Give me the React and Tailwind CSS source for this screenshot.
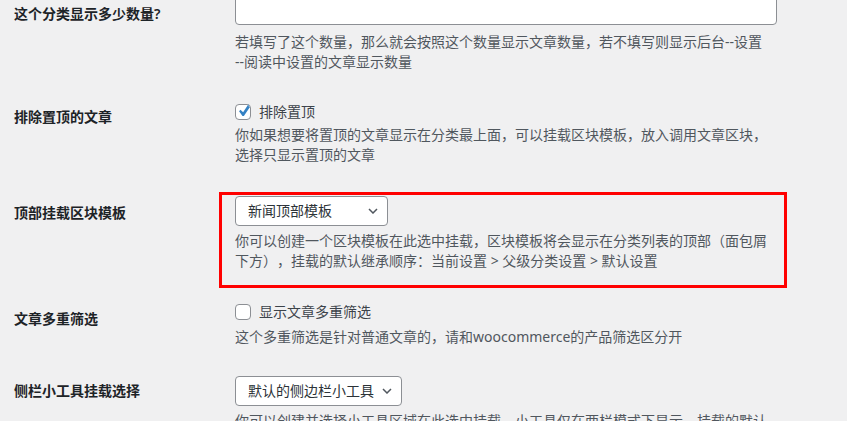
import React from "react";

const Chevron = () => (
  <svg width="10" height="6" viewBox="0 0 10 6" fill="none" stroke="#50575e" strokeWidth="1.5">
    <path d="M1 1l4 4 4-4" />
  </svg>
);

const Checkbox = ({ checked }) => (
  <span className="flex items-center justify-center w-[16px] h-[16px] shrink-0 rounded-[4px] border border-[#8c8f94] bg-white overflow-visible">
    {checked && (
      <svg width="21" height="21" viewBox="0 0 20 20" className="shrink-0 -mr-[1px] mb-[1px]">
        <path fill="#3582c4" d="M14.83 4.89l1.34.94-5.81 8.38H9.02L5.78 9.67l1.34-1.25 2.53 2.36 5.18-7.89z" />
      </svg>
    )}
  </span>
);

const Select = ({ value, width }) => (
  <div className={`flex items-center justify-between h-[30px] ${width} pl-[12px] pr-[9px] rounded-[4px] border border-[#8c8f94] bg-white text-[14px] leading-5 text-[#2c3338]`}>
    <span>{value}</span>
    <Chevron />
  </div>
);

const Label = ({ children, pt }) => (
  <div className={`w-[219px] shrink-0 pl-[14px] ${pt} text-[14px] leading-5 font-semibold text-[#1d2327]`}>
    {children}
  </div>
);

export default function App() {
  return (
    <div
      className="min-h-screen bg-[#f0f0f1] overflow-hidden [text-spacing-trim:space-all]"
      style={{ fontFamily: '"Noto Sans", "Noto Sans CJK SC", sans-serif' }}
    >
      {/* 数量 */}
      <div className="flex items-start -mt-[5px]">
        <Label pt="pt-[9px]">这个分类显示多少数量?</Label>
        <div className="w-[568px] pl-[16px] pr-[10px]">
          <input
            type="text"
            className="block w-full h-[30px] rounded-[4px] border border-[#8c8f94] bg-white"
          />
          <p className="mt-[7px] text-[14px] leading-5 text-[#50575e]">
            若填写了这个数量，那么就会按照这个数量显示文章数量，若不填写则显示后台--设置
            <br />
            --阅读中设置的文章显示数量
          </p>
        </div>
      </div>

      {/* 置顶 */}
      <div className="flex items-start">
        <Label pt="pt-[35px]">排除置顶的文章</Label>
        <div className="w-[568px] pl-[16px] pr-[10px] pt-[30px]">
          <label className="flex items-center gap-[8px] h-5 text-[14px] leading-5 text-[#3c434a]">
            <Checkbox checked />
            排除置顶
          </label>
          <p className="mt-[3px] text-[14px] leading-5 text-[#50575e]">
            你如果想要将置顶的文章显示在分类最上面，可以挂载区块模板，放入调用文章区块，选择只显示置顶的文章
          </p>
        </div>
      </div>

      {/* 顶部模板 */}
      <div className="flex items-start mt-[27px]">
        <Label pt="pt-[11px]">顶部挂载区块模板</Label>
        <div className="w-[568px] border-[3px] border-[#ff0000] pl-[13px] pr-[7px] pt-[1px] pb-[14px]">
          <Select value="新闻顶部模板" width="w-[153px]" />
          <p className="mt-[5px] text-[14px] leading-5 text-[#50575e]">
            你可以创建一个区块模板在此选中挂载，区块模板将会显示在分类列表的顶部（面包屑下方），挂载的默认继承顺序：当前设置 &gt; 父级分类设置 &gt; 默认设置
          </p>
        </div>
      </div>

      {/* 多重筛选 */}
      <div className="flex items-start">
        <Label pt="pt-[21px]">文章多重筛选</Label>
        <div className="w-[568px] pl-[16px] pr-[10px] pt-[14px]">
          <label className="flex items-center gap-[8px] h-5 text-[14px] leading-5 text-[#3c434a]">
            <Checkbox />
            显示文章多重筛选
          </label>
          <p className="mt-[5px] text-[14px] leading-5 text-[#50575e]">
            这个多重筛选是针对普通文章的，请和woocommerce的产品筛选区分开
          </p>
        </div>
      </div>

      {/* 侧栏小工具 */}
      <div className="flex items-start">
        <Label pt="pt-[34px]">侧栏小工具挂载选择</Label>
        <div className="w-[568px] pl-[16px] pr-[10px] pt-[29px]">
          <Select value="默认的侧边栏小工具" width="w-[167px]" />
          <p className="mt-[5px] text-[14px] leading-5 text-[#50575e]">
            你可以创建并选择小工具区域在此选中挂载，小工具仅在两栏模式下显示，挂载的默认继承顺序：当前设置 &gt; 父级分类设置 &gt; 默认设置
          </p>
        </div>
      </div>
    </div>
  );
}
